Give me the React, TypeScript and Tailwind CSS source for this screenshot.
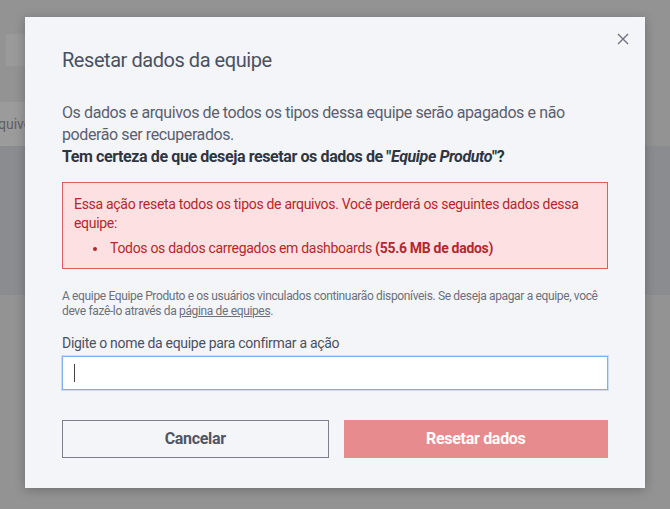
import React from "react";

export default function App() {
  return (
    <div
      className="relative w-[670px] h-[509px] overflow-hidden bg-[#939393]"
      style={{ fontFamily: '"Roboto", "Liberation Sans", sans-serif' }}
    >
      {/* underlying page hints */}
      <div className="absolute left-[6px] top-[34px] w-[40px] h-[32px] bg-[#9a9a9a]" />
      <div className="absolute left-0 top-[102px] w-[40px] h-[44px] bg-[#9b9b9b] flex items-center text-[14px] text-[#5c5f66] overflow-hidden">
        <span className="whitespace-nowrap -ml-[2px]">quivos</span>
      </div>
      <div className="absolute left-0 right-0 top-[146px] h-[149px] bg-[#8b8c8f]" />

      {/* modal */}
      <div className="absolute left-[25px] top-[17px] w-[620px] h-[471px] bg-[#f4f5f9] shadow-[0_2px_10px_rgba(0,0,0,0.25)] px-[37px] pt-[28px]">
        <button className="absolute right-[14px] top-[14px] w-[16px] h-[16px] flex items-center justify-center text-[#6f7380]">
          <svg width="12" height="12" viewBox="0 0 12 12" fill="none" stroke="currentColor" strokeWidth="1.4">
            <path d="M1 1 L11 11 M11 1 L1 11" />
          </svg>
        </button>
        <h2 className="text-[20px] leading-[28px] tracking-[-0.45px] text-[#4b5160] mt-[1px]">Resetar dados da equipe</h2>

        <p className="mt-[28px] text-[16px] leading-[22px] tracking-[-0.4px] text-[#5a6070]">
          Os dados e arquivos de todos os tipos dessa equipe serão apagados e não poderão ser recuperados.
        </p>
        <p className="text-[16px] leading-[22px] tracking-[-0.4px] font-bold text-[#2f3542]">
          Tem certeza de que deseja resetar os dados de "<i>Equipe Produto</i>"?
        </p>

        <div className="mt-[14px] border border-[#e25b5e] bg-[#fde1e2] px-[11px] pt-[12px] pb-[10px] text-[14px] leading-[19px] tracking-[-0.3px] text-[#b4272c]">
          <p>Essa ação reseta todos os tipos de arquivos. Você perderá os seguintes dados dessa equipe:</p>
          <ul className="mt-[6px] pl-[19px]">
            <li className="flex items-center">
              <span className="w-[17px] flex items-center">
                <span className="block w-[4px] h-[4px] rounded-full bg-[#b4272c]" />
              </span>
              <span>
                Todos os dados carregados em dashboards <b>(55.6 MB de dados)</b>
              </span>
            </li>
          </ul>
        </div>

        <p className="mt-[20px] text-[12px] leading-[15px] tracking-[-0.35px] text-[#6b707c]">
          A equipe Equipe Produto e os usuários vinculados continuarão disponíveis. Se deseja apagar a equipe, você deve fazê-lo através da{" "}
          <span className="underline">página de equipes</span>.
        </p>

        <label className="block mt-[15px] text-[14px] leading-[19px] tracking-[-0.3px] text-[#4b5160]">
          Digite o nome da equipe para confirmar a ação
        </label>
        <div className="mt-[3px] h-[34px] bg-white border border-[#7fb0f2] shadow-[0_0_0_1px_rgba(127,176,242,0.35)] flex items-center px-[11px]">
          <div className="w-[1px] h-[18px] bg-[#444]" />
        </div>

        <div className="mt-[30px] flex gap-[15px]">
          <button className="flex-1 h-[38px] border border-[#7c808c] text-[16px] font-bold tracking-[-0.3px] text-[#4f5666]">
            Cancelar
          </button>
          <button className="flex-1 h-[38px] bg-[#e88b8e] text-[16px] font-bold tracking-[-0.3px] text-white">
            Resetar dados
          </button>
        </div>
      </div>
    </div>
  );
}
